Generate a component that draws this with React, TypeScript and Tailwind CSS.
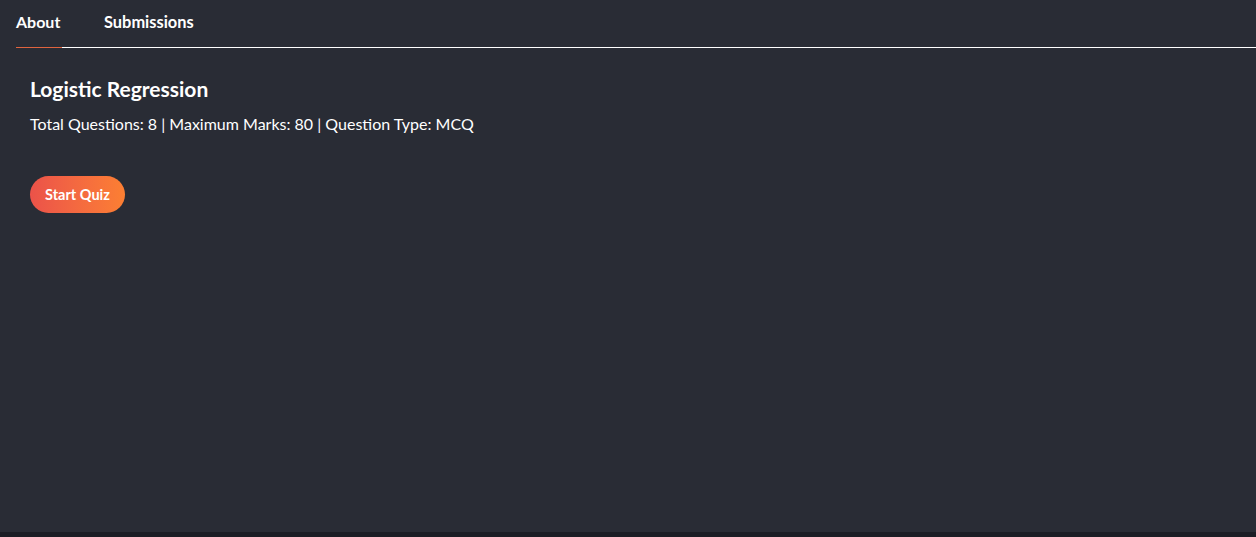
import React from 'react';

const App: React.FC = () => {
  return (
    <div className="w-[1256px] h-[537px] flex flex-col bg-[#1b1d25] font-['Lato',sans-serif] text-white antialiased">
      <div className="flex-1 bg-[#292c35]">
        {/* Tabs */}
        <div className="ml-4">
          <div className="flex h-[47px] items-baseline gap-[42px] pt-[12px]">
            <button className="w-[46px] text-left text-[16px] font-bold leading-[20px] text-white">About</button>
            <button className="text-[16.4px] font-bold leading-[20px] text-white">Submissions</button>
          </div>
          <div className="flex h-px">
            <div className="w-[46px] bg-[#e0643f]" />
            <div className="flex-1 bg-white" />
          </div>
        </div>

        {/* Quiz info */}
        <div className="px-[30px] pt-[28px]">
          <h1 className="text-[21px] font-bold leading-[26px]">Logistic Regression</h1>
          <p className="mt-[11px] text-[16px] leading-[22px]">
            Total Questions: 8 | Maximum Marks: 80 | Question Type: MCQ
          </p>
          <button className="mt-[41px] h-[37px] w-[95px] rounded-full bg-gradient-to-r from-[#eb5249] to-[#fc7f32] text-[14.5px] font-bold text-white">
            Start Quiz
          </button>
        </div>
      </div>
      <div className="h-[5px] bg-[#1b1d25]" />
    </div>
  );
};

export default App;
